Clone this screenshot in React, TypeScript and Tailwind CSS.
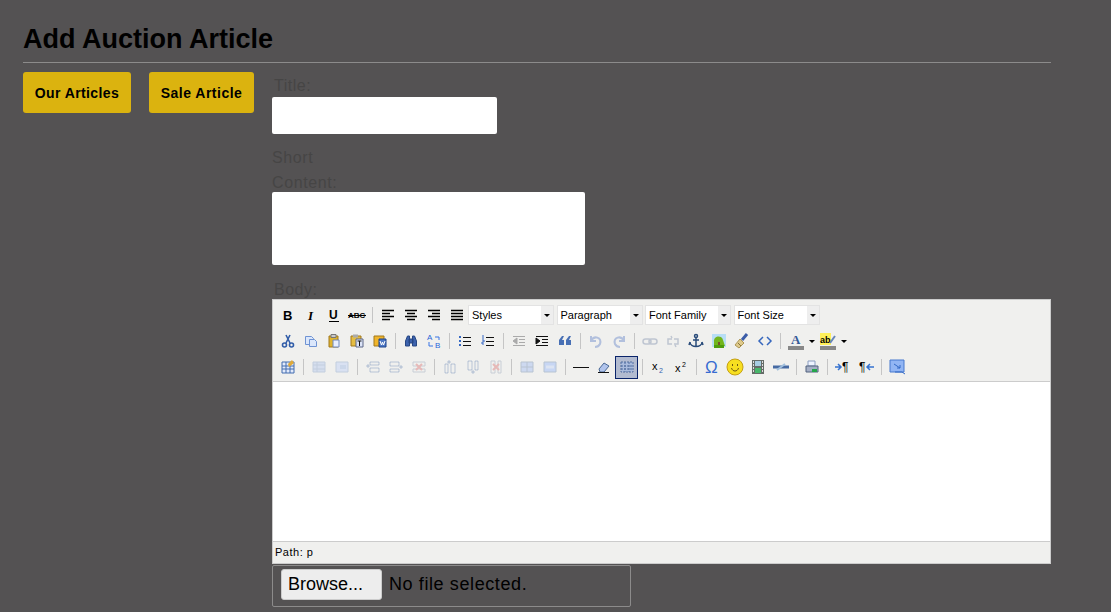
import type { ReactNode } from "react";

const glyphs: Record<string, ReactNode> = {
  bold: <text x="3" y="13" fontSize="13" fontWeight="bold">B</text>,
  italic: <text x="5" y="13" fontSize="13" fontStyle="italic" fontWeight="bold" fontFamily="Liberation Serif, serif">I</text>,
  underline: <><text x="3" y="12" fontSize="12" fontWeight="bold">U</text><path d="M3 14.5h10" stroke="#000" /></>,
  strike: <><text x="-1" y="11" fontSize="8" fontWeight="bold">ABC</text><path d="M-1 8.500h18" stroke="#000" /></>,
  left: <path d="M2 3.5h12M2 6.5h8M2 9.5h12M2 12.5h8" stroke="#000" strokeWidth="1.5" />,
  center: <path d="M2 3.5h12M4 6.5h8M2 9.5h12M4 12.5h8" stroke="#000" strokeWidth="1.5" />,
  right: <path d="M2 3.5h12M6 6.5h8M2 9.5h12M6 12.5h8" stroke="#000" strokeWidth="1.5" />,
  full: <path d="M2 3.5h12M2 6.5h12M2 9.5h12M2 12.5h12" stroke="#000" strokeWidth="1.5" />,
  cut: <g stroke="#315da8" fill="none" strokeWidth="1.6"><path d="M6 2l4 8M10 2L6 10" /><circle cx="4.5" cy="12" r="2" /><circle cx="11.5" cy="12" r="2" /></g>,
  copy: <g fill="#dbe7fb" stroke="#6f93d3"><path d="M2.500 3.500h6l2 2v6h-8z" /><path d="M6.500 6.500h5l2 2v5h-7z" /></g>,
  paste: <><path d="M3 3h9v11H3z" fill="#dfb32d" stroke="#a1791d" /><path d="M5 1.500h5v3H5z" fill="#c9c9c9" stroke="#777" /><path d="M7 7h6v7H7z" fill="#e8efff" stroke="#7188ba" /></>,
  pastetext: <><path d="M2 3h10v10H2z" fill="#e5bd42" stroke="#a1791d" /><path d="M4 1.500h5v3H4z" fill="#aaa" /><path d="M7 6h7v8H7z" fill="#dce4f7" stroke="#5d6786" /><path d="M8.500 8h4M10.500 8v5" stroke="#111" /></>,
  pasteword: <><path d="M2 3h10v10H2z" fill="#f0b52b" stroke="#a1791d" /><path d="M7 6h7v8H7z" fill="#4e78c4" stroke="#1d438c" /><path d="M8 8l1.500 4 1-3 1 3L13 8" stroke="white" fill="none" /></>,
  find: <g fill="#3c62ad" stroke="#274783"><path d="M2.500 8l2-5h2v10h-4zM9.500 3h2l2 5v5h-4zM6 6h4v4H6z" /></g>,
  replace: <><text x="1" y="7" fontSize="8" fill="#2a66d9">A</text><text x="9" y="15" fontSize="8" fill="#2a66d9">B</text><path d="M9 4h4v3M3 9v4h4" fill="none" stroke="#3974e5" /></>,
  bullets: <><path d="M2 3h2v2H2zM2 7h2v2H2zM2 11h2v2H2z" fill="#3669c5" /><path d="M6 4.500h8M6 8.500h8M6 12.500h8" stroke="#111" /></>,
  numbers: <><path d="M3 2v4M2 7h2v2H2v2h2" stroke="#3669c5" fill="none" /><path d="M6 4.500h8M6 8.500h8M6 12.500h8" stroke="#111" /></>,
  outdent: <path d="M2 3.500h12M8 6.500h6M8 9.500h6M2 12.500h12M6 5v6L2 8z" stroke="#aaa" fill="#aaa" />,
  indent: <path d="M2 3.500h12M8 6.500h6M8 9.500h6M2 12.500h12M2 5v6l4-3z" stroke="#111" fill="#111" />,
  quote: <path d="M2 7l3-4h2L5 7h2v5H2zM9 7l3-4h2l-2 4h2v5H9z" fill="#4870b5" />,
  undo: <path d="M3 3v5h5M3 8c3-6 11-4 9 3-1 2-3 3-5 3" fill="none" stroke="#3f67bd" strokeWidth="2" />,
  redo: <path d="M13 3v5H8M13 8C10 2 2 4 4 11c1 2 3 3 5 3" fill="none" stroke="#3f67bd" strokeWidth="2" />,
  link: <g fill="none" stroke="#65799f" strokeWidth="1.500"><rect x="1" y="6" width="8" height="5" rx="2.500" /><rect x="7" y="6" width="8" height="5" rx="2.500" /></g>,
  unlink: <g fill="none" stroke="#65799f" strokeWidth="1.500"><path d="M7 6H3v5h4M9 6h4v5H9M6 3l1 2M10 12l1 2" /></g>,
  anchor: <g fill="none" stroke="#294b7a" strokeWidth="1.500"><circle cx="8" cy="3" r="1.500" /><path d="M8 5v9M5 7h6M2 9c0 6 12 6 12 0M2 9l-1 3M14 9l1 3" /></g>,
  image: <><path d="M1 1h14v13H1z" fill="#b8def5" /><path d="M3 9a4.500 4.500 0 119-2l2 6H3z" fill="#73b51d" /><path d="M7 9h2v5H7z" fill="#78512b" /><path d="M3 12h10v3H3z" fill="#4f9d0d" /></>,
  cleanup: <><path d="M13 1L8 7" stroke="#3b5ca7" strokeWidth="3" /><path d="M6 6l4 4-5 5-4-3z" fill="#dfca8b" stroke="#ad9757" /><path d="M4 10l3 3" stroke="#86733b" /></>,
  code: <path d="M6 4L2 8l4 4M10 4l4 4-4 4" fill="none" stroke="#3667be" strokeWidth="1.500" />,
  fore: <><text x="3" y="11" fontSize="13" fontFamily="Liberation Serif, serif" fontWeight="bold" fill="#355a97">A</text><path d="M0 13h16v4H0z" fill="#888" /></>,
  back: <><path d="M0 0h11v12H0z" fill="#fff05a" /><text x="0" y="10" fontSize="9" fontWeight="bold">ab</text><path d="M10 10l5-7" stroke="#6886b7" strokeWidth="2" /><path d="M0 13h16v4H0z" fill="#888" /></>,
  table: <><path d="M2 3h12v11H2z" fill="#e2eafb" stroke="#426daf" /><path d="M2 7h12M2 10h12M6 3v11M10 3v11" stroke="#426daf" /><path d="M8 5l4-4 2 3-5 4z" fill="#e0aa39" /></>,
  row: <><path d="M2 3h12v10H2z" fill="#a4bdf0" stroke="#7391c3" /><path d="M2 6h12M2 10h12M6 3v10" stroke="#7391c3" /></>,
  cell: <><path d="M2 3h12v10H2z" fill="#afc8fa" stroke="#7391c3" /><path d="M6 6h6v4H6z" fill="#88a9e5" /></>,
  before: <path d="M5 3h9v3H5zM5 9h9v4H5zM1 7h4M3 5v4" fill="none" stroke="#5473a7" />,
  after: <path d="M2 3h9v4H2zM2 10h9v3H2zM11 8h4M13 6v4" fill="none" stroke="#5473a7" />,
  remove: <><path d="M2 3h12v4H2zM2 10h12v3H2z" fill="none" stroke="#8090ab" /><path d="M5 5l6 6M11 5l-6 6" stroke="#d55555" strokeWidth="2" /></>,
  colbefore: <path d="M3 5h3v9H3zM9 5h4v9H9zM7 1v4M5 3h4" fill="none" stroke="#5473a7" />,
  colafter: <path d="M3 2h4v9H3zM10 2h3v9h-3zM8 11v4M6 13h4" fill="none" stroke="#5473a7" />,
  colremove: <><path d="M3 2h4v12H3zM10 2h3v12h-3z" fill="none" stroke="#8090ab" /><path d="M5 5l6 6M11 5l-6 6" stroke="#d55555" strokeWidth="2" /></>,
  split: <><path d="M2 3h12v10H2z" fill="#8fb0f5" stroke="#53749f" /><path d="M8 3v10M2 8h12" stroke="#53749f" /></>,
  merge: <><path d="M2 3h12v10H2z" fill="#7da8ff" stroke="#53749f" /><path d="M4 8h8" stroke="#b9cffb" strokeWidth="3" /></>,
  hr: <path d="M0 8.500h16" stroke="#111" />,
  eraser: <><path d="M3 10l5-6 5 3-5 6H4z" fill="#b1c4ec" stroke="#496894" /><path d="M2 13.500h11" stroke="#111" /></>,
  visual: <><path d="M2 3h12v10H2z" fill="#a9bbdd" stroke="#536f9f" strokeDasharray="2 1" /><path d="M2 7h12M2 10h12M6 3v10M10 3v10" stroke="#536f9f" strokeDasharray="2 1" /></>,
  sub: <><text x="2" y="11" fontSize="11">x</text><text x="9" y="14" fontSize="7" fill="#3564b1">2</text></>,
  sup: <><text x="2" y="13" fontSize="11">x</text><text x="9" y="8" fontSize="7">2</text></>,
  omega: <text x="1" y="14" fontSize="17" fill="#376bd1">Ω</text>,
  smile: <><circle cx="8" cy="8" r="8" fill="#f7df20" stroke="#c49f14" /><path d="M4.500 9c1 4 6 4 7 0M5.500 5v2M10.500 5v2" fill="none" stroke="#6c5711" /></>,
  media: <><path d="M2 1h12v14H2z" fill="#656c68" /><path d="M5 2h6v5H5z" fill="#a7cce1" /><path d="M5 9h6v5H5z" fill="#48b66a" /><path d="M3.500 2v12M12.500 2v12" stroke="#ddd" strokeDasharray="2 1" /></>,
  advhr: <><path d="M0 8h16" stroke="#466aa2" strokeWidth="3" /><path d="M4 11l8-6" stroke="#a0bfdd" strokeWidth="2" /></>,
  print: <><path d="M4 2h7v5H4z" fill="#eef3ff" stroke="#8b9ec0" /><path d="M2 7h12v6H2z" fill="#a5afc5" stroke="#52637f" /><path d="M8 10h5v3H8z" fill="#24a64b" /></>,
  ltr: <><path d="M0 8h6M3 5l3 3-3 3" stroke="#3572d0" fill="none" strokeWidth="1.500" /><text x="7" y="12" fontSize="12">¶</text></>,
  rtl: <><text x="1" y="12" fontSize="12">¶</text><path d="M16 8h-6M12 5L9 8l3 3" stroke="#3572d0" fill="none" strokeWidth="1.500" /></>,
  screen: <><path d="M1 1h14v12H1z" fill="#91b5f4" stroke="#4778ce" /><path d="M5 5l6 4M8 9h3V6M6 13h7l3 2" stroke="#3269c6" fill="none" /></>,
};

const faded = new Set(["undo", "redo", "link", "unlink", "row", "cell", "before", "after", "remove", "colbefore", "colafter", "colremove", "split", "merge"]);

function Tool({ name }: { name: string }) {
  if (name === "|") {
    return <span className="flex h-5 w-2 shrink-0 items-center justify-center"><span className="h-4 w-px bg-[#c5c5c5]" /></span>;
  }
  if (name === "v") {
    return <span className="flex h-5 w-[9px] shrink-0 items-center justify-center"><span className="border-x-[3px] border-t-[3px] border-x-transparent border-t-black" /></span>;
  }
  const active = name === "visual" ? "border border-[#0a246a] bg-[#b2bbd0]" : "";
  return (
    <button type="button" aria-label={name} className={`flex h-[23px] w-[23px] shrink-0 items-center justify-center ${active}`}>
      <svg viewBox="0 0 16 16" className={`h-4 w-4 overflow-visible ${faded.has(name) ? "opacity-35" : ""}`}>{glyphs[name]}</svg>
    </button>
  );
}

function Tools({ items }: { items: string }) {
  return <>{items.split(" ").map((name, i) => <Tool key={i} name={name} />)}</>;
}

function Picker({ label }: { label: string }) {
  return (
    <div className="mr-[2.5px] flex h-5 w-[86px] shrink-0 border border-[#e3e3e3]">
      <span className="w-[72px] bg-white pl-[3px] text-[11px] leading-[18px]">{label}</span>
      <span className="flex flex-1 items-center justify-center bg-[#eee]"><span className="border-x-[3px] border-t-[3px] border-x-transparent border-t-black" /></span>
    </div>
  );
}

export default function App() {
  return (
    <main className="h-[612px] overflow-hidden bg-[#545253] px-[23px] pt-[22px] font-['Liberation_Sans',sans-serif] text-black">
      <header className="h-[41px] w-[1028px] border-b border-[#8c8b8b]">
        <h1 className="text-[27px] leading-[35px] font-bold whitespace-nowrap">Add Auction Article</h1>
      </header>
      <div className="flex">
        <nav className="flex w-[249px] shrink-0 gap-[18px] pt-[9px]">
          <button className="h-[41px] w-[108px] rounded-[3px] bg-[#dbb30f] pt-px text-[14px] font-bold tracking-[0.4px] whitespace-nowrap">Our Articles</button>
          <button className="h-[41px] w-[105px] rounded-[3px] bg-[#dbb30f] pt-px text-[14px] font-bold tracking-[0.5px] whitespace-nowrap">Sale Article</button>
        </nav>
        <form className="flex w-[779px] shrink-0 flex-col text-[16px] text-[#464545]">
          <label className="mt-[11px] h-[23px] pl-0.5 leading-6 tracking-[0.5px]">Title:</label>
          <input aria-label="Title" className="h-[37px] w-[225px] rounded-[2px] bg-white" />
          <label className="mt-[11px] h-[47px] w-20 leading-[25px] tracking-[0.6px]">Short Content:</label>
          <textarea aria-label="Short content" className="h-[73px] w-[313px] resize-none rounded-[2px] bg-white" />
          <label className="mt-[13px] h-[21px] pl-0.5 leading-6 tracking-[0.5px]">Body:</label>
          <section className="h-[265px] w-[779px] border border-[#ccc] bg-white text-black">
            <div className="flex h-[82px] flex-col border-b border-[#ccc] bg-[#f0f0ee] pt-[2px] pl-[3px]">
              <div className="flex h-[26px] items-center">
                <Tools items="bold italic underline strike | left center right full" />
                <Picker label="Styles" /><Picker label="Paragraph" /><Picker label="Font Family" /><Picker label="Font Size" />
              </div>
              <div className="flex h-[26px] items-center">
                <Tools items="cut copy paste pastetext pasteword | find replace | bullets numbers | outdent indent quote | undo redo | link unlink anchor image cleanup code | fore v back v" />
              </div>
              <div className="flex h-[26px] items-center">
                <Tools items="table | row cell | before after remove | colbefore colafter colremove | split merge | hr eraser visual | sub sup | omega smile media advhr | print | ltr rtl | screen" />
              </div>
            </div>
            <div className="h-[159px]" />
            <div className="h-[22px] border-t border-[#ccc] bg-[#f0f0ee] pl-0.5 text-[11px] leading-[21px] tracking-[0.5px]">Path: p</div>
          </section>
          <div className="mt-px flex h-[42px] w-[359px] items-center rounded-[2px] border border-[#8c8b8b] pl-2 text-black">
            <button type="button" className="-mt-1 h-[31px] w-[101px] rounded-[3px] border border-[#ccc] bg-[#ededed] pr-3 text-[18px] leading-[29px]">Browse...</button>
            <span className="-mt-1 ml-[7px] text-[18px] tracking-[0.6px]">No file selected.</span>
          </div>
        </form>
      </div>
    </main>
  );
}
